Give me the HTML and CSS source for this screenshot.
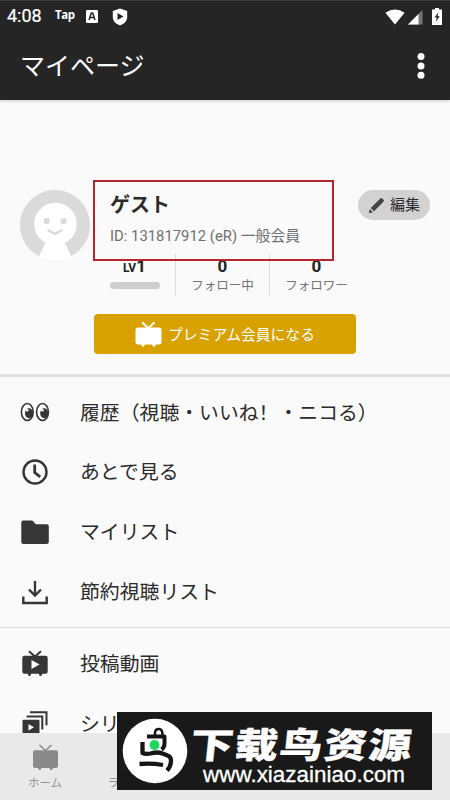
FILE: index.html
```html
<!DOCTYPE html>
<html lang="ja">
<head>
<meta charset="utf-8">
<title>マイページ</title>
<link rel="stylesheet" href="styles.css">
</head>
<body>
<div class="screen">
  <header class="top">
    <div class="status">
      <span class="time">4:08</span>
      <span class="tap">Tap</span>
      <svg class="s-a" width="12" height="13" viewBox="0 0 12 13"><rect width="12" height="13" rx="1" fill="#fff"/><path d="M3 10 5.3 3h1.4L9 10M4 7.6h4" fill="none" stroke="#252525" stroke-width="1.5"/></svg>
      <svg class="s-shield" width="16" height="18" viewBox="0 0 16 18"><path d="M8 .5 15.2 3v6c0 4-3 7-7.200 8.500C3.800 16 .8 13 .8 9V3z" fill="#fff"/><path d="M5.500 5v7l6-3.500z" fill="#252525"/></svg>
      <span class="grow"></span>
      <svg class="s-wifi" width="20" height="16" viewBox="0 0 20 16"><path d="M.4 3.700Q10-2.900 19.600 3.700L10 15.600z" fill="#fff"/></svg>
      <svg class="s-signal" width="15" height="15" viewBox="0 0 15 15"><path d="M14.500 0v14.500H0z" fill="#777"/><path d="M10.500 4v10.500H0z" fill="#fff"/></svg>
      <svg class="s-battery" width="10" height="17" viewBox="0 0 10 17"><path d="M3 0h4v1.500h3V17H0V1.500h3z" fill="#fff"/><path d="M6.500 4 2.500 9.500h2.300L3.800 14l4-5.800H5.500z" fill="#252525"/></svg>
    </div>
    <div class="appbar">
      <h1>マイページ</h1>
      <svg width="8" height="28" viewBox="0 0 8 28" fill="#fff"><circle cx="4" cy="4.500" r="3.500"/><circle cx="4" cy="14" r="3.500"/><circle cx="4" cy="23.300" r="3.500"/></svg>
    </div>
  </header>

  <section class="profile">
    <div class="person">
      <svg class="avatar" width="70" height="70" viewBox="0 0 70 70"><path d="M19.500 66.500A35 35 0 1 1 50.500 66.500Z" fill="#dadada"/><circle cx="35.500" cy="34" r="21.300" fill="#fff"/><path d="M27 50 18 68Q35 73 52 68L43.500 50z" fill="#fff"/><circle cx="26.700" cy="31" r="3.100" fill="#dadada"/><circle cx="43.500" cy="31" r="3.100" fill="#dadada"/><path d="M28.500 40.500 35 43.800 41.500 40.500" fill="none" stroke="#dadada" stroke-width="2.500" stroke-linecap="round" stroke-linejoin="round"/></svg>
      <div class="identity">
        <h2>ゲスト</h2>
        <p>ID: 131817912 (eR) 一般会員</p>
      </div>
      <button class="edit"><svg width="17" height="17" viewBox="0 0 17 17" fill="#444"><path d="m.8 16.200 1-4.200 3.200 3.200zM2.800 11 12.300 1.600q1-1 2 0l1.200 1.200q1 1 0 2L6 14.200z"/></svg><span>編集</span></button>
    </div>
    <div class="stats">
      <div class="level"><b><small>LV</small>1</b><i></i></div>
      <div class="stat following"><b>0</b><span>フォロー中</span></div>
      <div class="stat followers"><b>0</b><span>フォロワー</span></div>
    </div>
    <button class="premium"><svg width="27" height="27" viewBox="0 0 27 27"><path d="m7 1.200 6.500 6L19.500 1.200" fill="none" stroke="#fff" stroke-width="2"/><path d="M3 6.500h21q2.500 0 2.500 2.500v12.500q0 2-2.500 2h-3l-1.300 2.300h-1.400L17 23.500H10l-1.300 2.300H7.300L6 23.500H3q-2.500 0-2.500-2V9q0-2.500 2.500-2.500" fill="#fff"/></svg><span>プレミアム会員になる</span></button>
  </section>

  <ul class="menu history">
    <li><svg width="30" height="30" viewBox="0 0 30 30"><g fill="#fff" stroke="#363636" stroke-width="1.600"><ellipse cx="7.300" cy="15" rx="5.900" ry="8.500"/><ellipse cx="22.500" cy="15" rx="5.900" ry="8.500"/></g><g fill="#363636"><ellipse cx="9" cy="16.200" rx="4" ry="5"/><ellipse cx="24.200" cy="16.200" rx="4" ry="5"/></g><circle cx="7.200" cy="13.300" r="1.300" fill="#fff"/><circle cx="22.400" cy="13.300" r="1.300" fill="#fff"/></svg><span>履歴（視聴・いいね<i class="bang" lang="zh-CN">！</i>・ニコる）</span></li>
    <li><svg width="30" height="30" viewBox="0 0 30 30" fill="none" stroke="#363636"><circle cx="15" cy="15" r="11.500" stroke-width="2.400"/><path d="M14.700 7.500v8l5.500 4.300" stroke-width="2.800"/></svg><span>あとで見る</span></li>
    <li><svg width="30" height="30" viewBox="0 0 30 30"><path d="M3.300 3.500h8.200q1 0 1.800.8l2.500 3h11q2 0 2 2v15.200q0 2.500-2.500 2.500h-23q-2 0-2-2V5.500q0-2 2-2" fill="#363636"/></svg><span>マイリスト</span></li>
    <li><svg width="30" height="30" viewBox="0 0 30 30" fill="none" stroke="#363636" stroke-width="2.400"><path d="M15 4v14M9 12.500l6 6 6-6M3.300 19.500v6.500h23.400v-6.500"/></svg><span>節約視聴リスト</span></li>
  </ul>
  <ul class="menu uploads">
    <li><svg width="30" height="30" viewBox="0 0 30 30"><path d="m9 2.300 6 5.300 6-5.300" fill="none" stroke="#363636" stroke-width="2"/><path d="M4.500 6.700h21q2.200 0 2.200 2.300v13.500q0 2.200-2.200 2.200h-3.200l-1 2.300h-1.500l-1-2.300h-7.600l-1 2.300H8.700l-1-2.300H4.500q-2.200 0-2.200-2.200V9q0-2.300 2.200-2.300" fill="#363636"/><path d="M11.500 11v9l8-4.500z" fill="#fff"/></svg><span>投稿動画</span></li>
    <li><svg width="30" height="30" viewBox="0 0 30 30"><g fill="none" stroke="#363636" stroke-width="2"><path d="M10 3.300h16.500v13M6.500 7.500h15.800v13"/></g><path d="M3.500 10.700h15q1 0 1 1V26h-17V11.700q0-1 1-1" fill="#363636"/><path d="M8.500 15v6.500l5.500-3.200z" fill="#fff"/></svg><span>シリーズ</span></li>
  </ul>

  <nav class="tabs">
    <div class="tab"><svg width="27" height="27" viewBox="0 0 27 27"><path d="m7.500 1 6 5.500 6-5.500" fill="none" stroke="#8a8a8a" stroke-width="1.600"/><path d="M3 6.300h21q2 0 2 2V22q0 2-2 2h-3l-1 2h-1.500l-1-2h-8l-1 2H7l-1-2H3q-2 0-2-2V8.300q0-2 2-2" fill="#8a8a8a"/></svg><span>ホーム</span></div>
    <div class="tab next"><span>ランキング</span></div>
  </nav>

  <aside class="banner">
    <svg class="bird" width="66" height="66" viewBox="0 0 66 66"><circle cx="33" cy="33" r="32.300" fill="#fff"/><g fill="none" stroke="#151515" stroke-linejoin="round"><path d="M33 17v-2q0-4 4-4 3.500 0 3.500 6" stroke-width="2.500"/><path d="M25 18.500h17.500v7q0 4-3 6" stroke-width="4"/><path d="M20.500 24v11q3 1.500 8 .5 7-2 12 0l5 2q3.500 1 3.500 5 0 6-4 10" stroke-width="4.300"/><path d="M17.500 46q12-1 23.500 1" stroke-width="4.300"/></g><circle cx="32.500" cy="27" r="5" fill="#20d760"/></svg>
    <div class="words"><strong lang="zh-CN">下载鸟资源</strong><span>www.xiazainiao.com</span></div>
  </aside>
</div>
</body>
</html>
```

FILE: styles.css
```css
* { box-sizing: border-box; }
body { margin: 0; background: #fafafa; color: #2b2b2b; font-family: Roboto, "Noto Sans CJK JP", sans-serif; }
h1, h2, p, ul { margin: 0; padding: 0; }
button { border: 0; padding: 0; font: inherit; color: inherit; }
svg { display: block; flex: none; }
.screen { position: relative; width: 450px; height: 800px; overflow: hidden; display: flex; flex-direction: column; }

.top { flex: none; height: 100px; background: #252525; color: #fff; border-top: 1px solid #3a3a3a; box-shadow: 0 1px 3px #0003; }
.status { height: 31px; display: flex; align-items: center; padding: 0 8px 0 7px; }
.time { width: 48px; font-size: 18px; line-height: 30px; white-space: nowrap; padding-bottom: 1px; -webkit-text-stroke: .2px #fff; }
.tap { width: 31px; font: 700 11.5px/24px "Open Sans", sans-serif; padding-bottom: 3px; letter-spacing: -.4px; }
.s-a { margin-right: 14px; }
.grow { flex: 1; }
.s-wifi { margin-right: 3px; }
.s-signal { margin: 2px 9px 0 0; }
.appbar { height: 68px; display: flex; justify-content: space-between; align-items: center; padding: 0 25px 1px 20px; }
h1 { font-size: 25px; font-weight: 400; line-height: 36px; padding-top: 2px; }

.profile { flex: none; height: 277px; padding-top: 80px; border-bottom: 3px solid #e0e0e0; }
.person { display: flex; align-items: flex-start; padding-left: 20px; height: 74px; }
.avatar { margin-top: 10px; }
.identity { position: relative; margin-left: 3px; width: 241px; height: 81px; padding: 11px 0 0 15px; border: 2px solid #b4252e; white-space: nowrap; }
h2 { font-size: 20px; line-height: 24px; font-weight: 600; }
.identity p { margin-top: 9px; font-size: 14.85px; line-height: 20px; color: #707070; }
.edit { margin: 10px 0 0 24px; width: 72px; height: 30px; border-radius: 15px; background: #d2d2d2; display: flex; align-items: center; padding-left: 10px; gap: 5px; font-size: 15px; line-height: 28px; }
.stats { display: flex; height: 41px; padding-left: 94px; text-align: center; color: #222; }
.stats b { font-size: 17px; line-height: 20px; height: 20px; margin-top: 2px; font-weight: 700; }
.stats small { font-size: 12px; }
.level { width: 81px; display: flex; flex-direction: column; align-items: center; }
.level i { width: 50px; height: 7px; border-radius: 4px; background: #cecece; margin-top: 6px; }
.stat { width: 94px; display: flex; flex-direction: column; align-items: center; border-left: 1px solid #dcdcdc; }
.stat span { margin-top: 1px; font-size: 12.5px; line-height: 18px; color: #747474; white-space: nowrap; }
.premium { margin: 19px 0 0 94px; width: 262px; height: 40px; border-radius: 4px; background: #d7a100; color: #fff; display: flex; align-items: center; padding-left: 41px; gap: 6px; font-size: 14.8px; white-space: nowrap; }
.premium span { padding-bottom: 2px; }

.menu { flex: none; list-style: none; }
.menu li { display: flex; align-items: center; height: 60px; padding-left: 20px; font-size: 19.85px; line-height: 30px; white-space: nowrap; }
.menu li span { margin-left: 30px; padding-top: 1px; }
.bang { font-style: normal; font-family: "Noto Sans CJK SC", sans-serif; }
.history { height: 251px; padding-top: 5px; border-bottom: 1px solid #dadada; }
.uploads { height: 105px; overflow: hidden; padding-top: 6px; }

.tabs { height: 67px; background: #e9e9e9; display: flex; color: #929292; font-size: 11.5px; line-height: 16px; }
.tab { width: 90px; padding-top: 11px; display: flex; flex-direction: column; align-items: center; }
.tab span { margin-top: 4px; }
.next { padding: 38px 0 0 2px; }

.banner { position: absolute; left: 117px; top: 712px; width: 315px; height: 78px; background: #191919; color: #fff; display: flex; align-items: center; padding-left: 5px; }
.words { width: 226px; margin: 3px 0 0 1px; display: flex; flex-direction: column; align-items: center; white-space: nowrap; }
.words strong { font: 900 43px/44px "Noto Sans CJK SC", sans-serif; letter-spacing: 1.5px; -webkit-text-stroke: .4px #fff; transform: skewX(-6deg) scaleY(.82); }
.words span { font: 22px/22px "Liberation Sans", sans-serif; margin-left: 4px; -webkit-text-stroke: .3px #fff; transform: scaleX(1.02); }
```
